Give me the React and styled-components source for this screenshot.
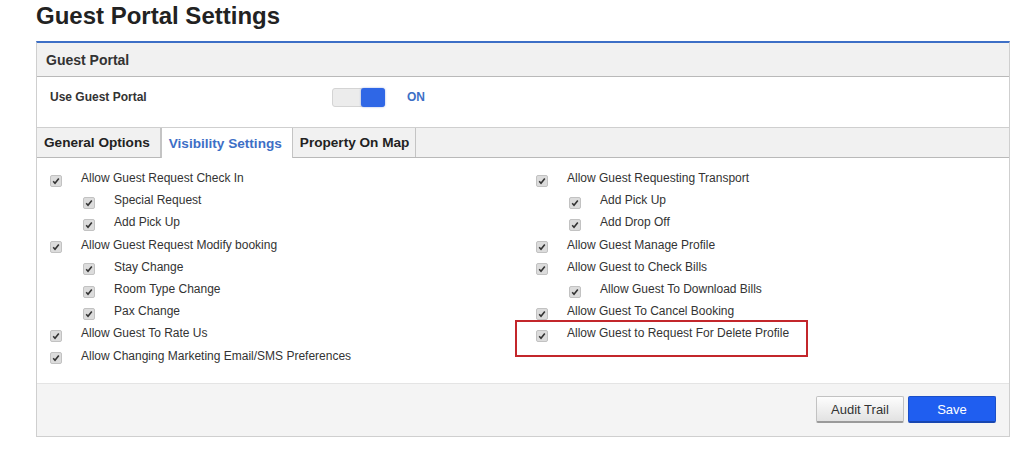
import React from "react";
import styled, { createGlobalStyle } from "styled-components";

const GlobalStyle = createGlobalStyle`
  body {
    margin: 0;
    background: #fff;
    font-family: "Liberation Sans", Arial, sans-serif;
  }
`;

const Page = styled.div`
  width: 974px;
  padding: 2px 0 0 36px;
`;

const Title = styled.h1`
  margin: 0 0 11px;
  font-size: 24px;
  line-height: 28px;
  font-weight: bold;
  color: #222;
`;

const Panel = styled.div`
  border: 1px solid #cfcfcf;
  border-top: 2px solid #3d6fc6;
`;

const PanelHeader = styled.div`
  height: 33px;
  display: flex;
  align-items: center;
  padding-left: 9px;
  background: #f1f1f1;
  border-bottom: 1px solid #b9b9b9;
  font-size: 14px;
  font-weight: bold;
  color: #333;
`;

const PortalRow = styled.div`
  height: 50px;
  box-sizing: border-box;
  display: flex;
  align-items: center;
  padding: 0 0 10px 13px;
`;

const PortalLabel = styled.span`
  width: 282px;
  font-size: 12px;
  font-weight: bold;
  color: #333;
`;

const Toggle = styled.div`
  width: 53px;
  height: 19px;
  box-sizing: border-box;
  display: flex;
  justify-content: flex-end;
  background: #ececec;
  border: 1px solid #d4d4d4;
  border-radius: 3px;
`;

const Knob = styled.div`
  width: 24px;
  height: 19px;
  margin: -1px -1px 0 0;
  background: #2f67e6;
  border-radius: 3px;
  box-shadow: 0 0 2px rgba(40, 80, 200, 0.5);
`;

const OnText = styled.span`
  margin-left: 22px;
  font-size: 12px;
  font-weight: bold;
  color: #3d6fc6;
`;

const TabBar = styled.div`
  height: 29px;
  display: flex;
  background: #f1f1f1;
  border-top: 1px solid #cfcfcf;
  border-bottom: 1px solid #b9b9b9;
`;

const Tab = styled.div`
  display: flex;
  align-items: center;
  padding: 0 ${({ $pad }) => $pad}px 0 7px;
  margin-bottom: ${({ $active }) => ($active ? "-1px" : "0")};
  background: ${({ $active }) => ($active ? "#fff" : "#f1f1f1")};
  border-right: 1px solid #c4c4c4;
  border-left: ${({ $active }) => ($active ? "1px solid #c4c4c4" : "none")};
  font-size: 13.6px;
  font-weight: bold;
  color: ${({ $active }) => ($active ? "#3d6fc6" : "#222")};
`;

const Content = styled.div`
  display: grid;
  grid-template-columns: 486px 1fr;
  padding: 9px 0 16px 13px;
`;

const Column = styled.div`
  display: flex;
  flex-direction: column;
`;

const Item = styled.div`
  position: relative;
  height: 22.2px;
  display: flex;
  align-items: center;
  padding-left: ${({ $level }) => ($level ? 33 : 0)}px;
  font-size: 12px;
  color: #333;

  &::after {
    content: "";
    display: ${({ $marked }) => ($marked ? "block" : "none")};
    position: absolute;
    left: -21px;
    top: -2px;
    width: 289px;
    height: 33px;
    border: 2px solid #c3262b;
  }
`;

const Box = styled.span`
  width: 10px;
  height: 10px;
  margin: 5px 19px 0 0;
  display: inline-flex;
  align-items: center;
  justify-content: center;
  flex-shrink: 0;
  background: #dcdcdc;
  border: 1px solid #c2c2c2;
  border-radius: 2px;
`;

const Footer = styled.div`
  height: 52px;
  display: flex;
  align-items: center;
  justify-content: flex-end;
  gap: 4px;
  padding-right: 13px;
  background: #f4f4f4;
  border-top: 1px solid #e4e4e4;
`;

const Button = styled.button`
  width: 88px;
  height: 27px;
  font-family: "Liberation Sans", Arial, sans-serif;
  font-size: 13px;
  border-radius: 2px;
  cursor: pointer;
  color: ${({ $primary }) => ($primary ? "#fff" : "#333")};
  background: ${({ $primary }) =>
    $primary ? "#1f5ef0" : "linear-gradient(#fdfdfd, #e2e2e2)"};
  border: 1px solid ${({ $primary }) => ($primary ? "#1b4fc8" : "#c2c2c2")};
  border-bottom: 2px solid ${({ $primary }) => ($primary ? "#1846b0" : "#9a9a9a")};
`;

const Check = () => (
  <Box>
    <svg width="8" height="8" viewBox="0 0 8 8">
      <path d="M1.2 4.3 L3 6.2 L6.8 1.6" fill="none" stroke="#333" strokeWidth="1.6" />
    </svg>
  </Box>
);

const leftItems = [
  ["Allow Guest Request Check In", 0],
  ["Special Request", 1],
  ["Add Pick Up", 1],
  ["Allow Guest Request Modify booking", 0],
  ["Stay Change", 1],
  ["Room Type Change", 1],
  ["Pax Change", 1],
  ["Allow Guest To Rate Us", 0],
  ["Allow Changing Marketing Email/SMS Preferences", 0],
];

const rightItems = [
  ["Allow Guest Requesting Transport", 0],
  ["Add Pick Up", 1],
  ["Add Drop Off", 1],
  ["Allow Guest Manage Profile", 0],
  ["Allow Guest to Check Bills", 0],
  ["Allow Guest To Download Bills", 1],
  ["Allow Guest To Cancel Booking", 0],
  ["Allow Guest to Request For Delete Profile", 0, true],
];

const renderItems = (items) =>
  items.map(([label, level, marked]) => (
    <Item key={label + level} $level={level} $marked={marked}>
      <Check />
      {label}
    </Item>
  ));

const App = () => (
  <>
    <GlobalStyle />
    <Page>
      <Title>Guest Portal Settings</Title>
      <Panel>
        <PanelHeader>Guest Portal</PanelHeader>
        <PortalRow>
          <PortalLabel>Use Guest Portal</PortalLabel>
          <Toggle>
            <Knob />
          </Toggle>
          <OnText>ON</OnText>
        </PortalRow>
        <TabBar>
          <Tab $pad={10}>General Options</Tab>
          <Tab $active $pad={10}>Visibility Settings</Tab>
          <Tab $pad={6}>Property On Map</Tab>
        </TabBar>
        <Content>
          <Column>{renderItems(leftItems)}</Column>
          <Column>{renderItems(rightItems)}</Column>
        </Content>
        <Footer>
          <Button>Audit Trail</Button>
          <Button $primary>Save</Button>
        </Footer>
      </Panel>
    </Page>
  </>
);

export default App;
